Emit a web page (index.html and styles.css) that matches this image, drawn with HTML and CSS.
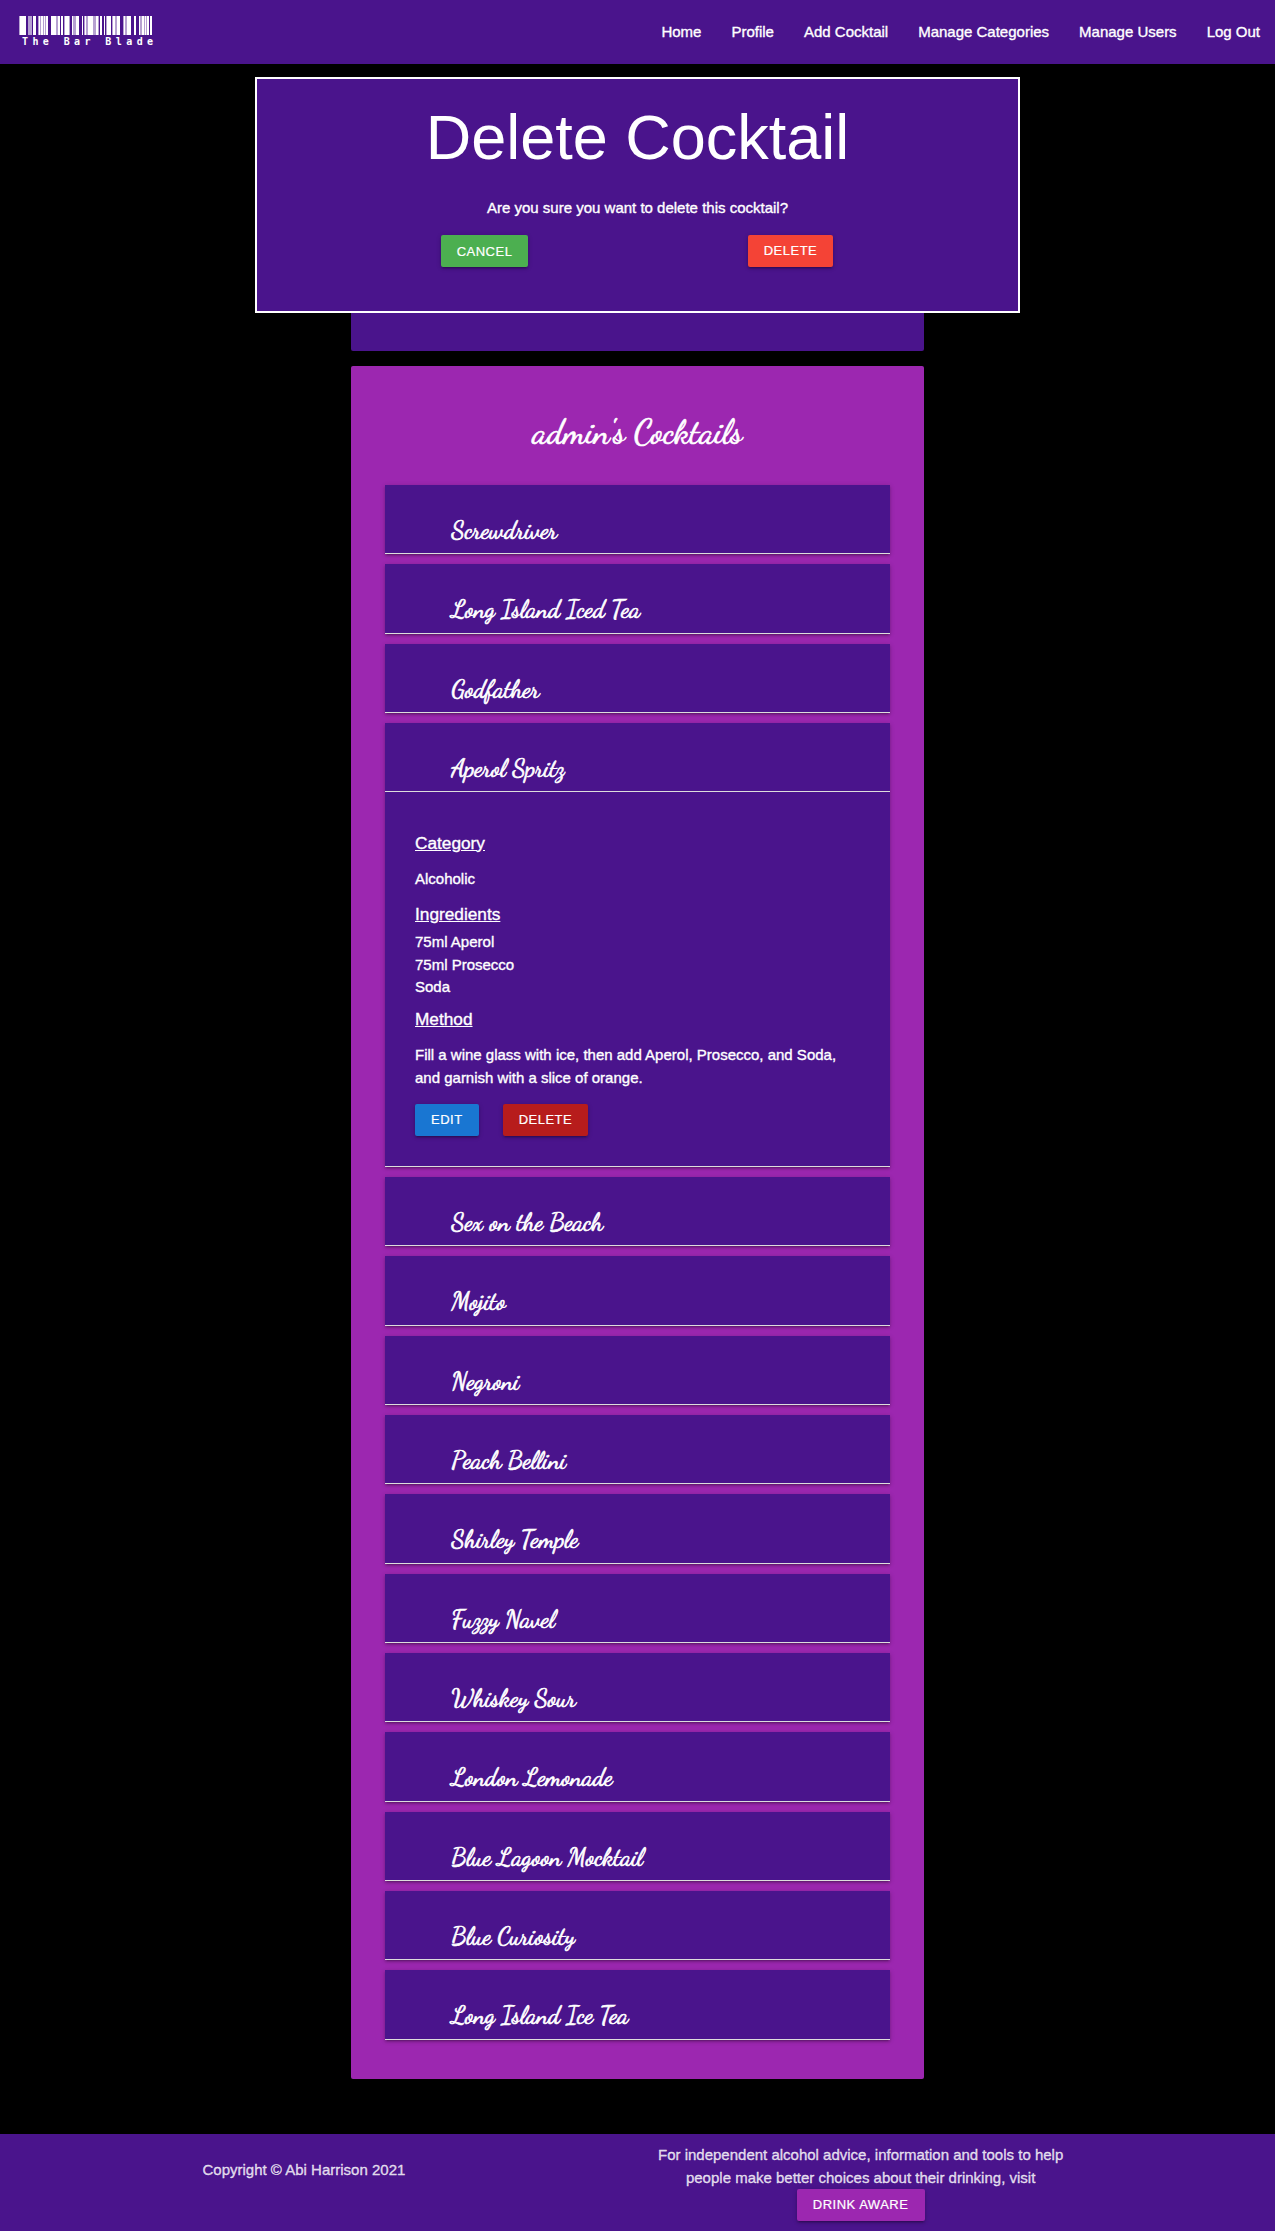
FILE: index.html
```html
<!DOCTYPE html>
<html lang="en">
<head>
<meta charset="utf-8">
<title>The Bar Blade</title>
<link rel="stylesheet" href="styles.css">
</head>
<body>
<nav class="navbar">
  <a class="logo">
    <svg class="barcode" width="134" height="20" viewBox="0 0 134 20" fill="#fff">
      <path opacity=".6" d="M0 1h7v19h-7zM9 1h4v19h-4zM19 1h10v19h-10zM36 1h5v19h-5zM45 1h6v19h-6zM53 1h7v19h-7zM65 1h15v19h-15zM87 1h5v19h-5zM93 1h8v19h-8zM104 1h8v19h-8zM120 1h10v19h-10z"/>
      <path d="M1 1h2v19h-2zM3 1h4v19h-4zM14 1h3v19h-3zM20 1h1v19h-1zM22 1h2v19h-2zM25 1h1v19h-1zM27 1h2v19h-2zM32 1h5v19h-5zM39 1h2v19h-2zM42 1h2v19h-2zM46 1h4v19h-4zM53 1h1v19h-1zM57 1h3v19h-3zM63 1h1v19h-1zM66 1h1v19h-1zM69 1h5v19h-5zM77 1h2v19h-2zM81 1h2v19h-2zM85 1h1v19h-1zM88 1h4v19h-4zM94 1h2v19h-2zM98 1h3v19h-3zM105 1h1v19h-1zM108 1h4v19h-4zM115 1h2v19h-2zM120 1h1v19h-1zM123 1h2v19h-2zM126 1h1v19h-1zM128 1h2v19h-2zM131 1h2v19h-2z"/>
    </svg>
    <span class="brand">The Bar Blade</span>
  </a>
  <ul class="menu">
    <li>Home</li><li>Profile</li><li>Add Cocktail</li><li>Manage Categories</li><li>Manage Users</li><li>Log Out</li>
  </ul>
</nav>
<main class="page">
  <section class="profile-card"></section>
  <section class="cocktails">
    <h4 class="title">admin's Cocktails</h4>
    <ul class="list">
      <li class="item"><div class="name">Screwdriver</div></li>
      <li class="item"><div class="name">Long Island Iced Tea</div></li>
      <li class="item"><div class="name">Godfather</div></li>
      <li class="item"><div class="name">Aperol Spritz</div>
        <div class="details">
          <h6>Category</h6>
          <p>Alcoholic</p>
          <h6>Ingredients</h6>
          <ul><li>75ml Aperol</li><li>75ml Prosecco</li><li>Soda</li></ul>
          <h6>Method</h6>
          <p>Fill a wine glass with ice, then add Aperol, Prosecco, and Soda, and garnish with a slice of orange.</p>
          <div class="actions"><a class="btn blue">Edit</a><a class="btn dark-red">Delete</a></div>
        </div>
      </li>
      <li class="item"><div class="name">Sex on the Beach</div></li>
      <li class="item"><div class="name">Mojito</div></li>
      <li class="item"><div class="name">Negroni</div></li>
      <li class="item"><div class="name">Peach Bellini</div></li>
      <li class="item"><div class="name">Shirley Temple</div></li>
      <li class="item"><div class="name">Fuzzy Navel</div></li>
      <li class="item"><div class="name">Whiskey Sour</div></li>
      <li class="item"><div class="name">London Lemonade</div></li>
      <li class="item"><div class="name">Blue Lagoon Mocktail</div></li>
      <li class="item"><div class="name">Blue Curiosity</div></li>
      <li class="item"><div class="name">Long Island Ice Tea</div></li>
    </ul>
  </section>
</main>
<footer class="footer">
  <div class="copyright">Copyright © Abi Harrison 2021</div>
  <div class="advice">For independent alcohol advice, information and tools to help people make better choices about their drinking, visit <a class="btn purple">Drink Aware</a></div>
</footer>
<div class="modal">
  <h1>Delete Cocktail</h1>
  <p>Are you sure you want to delete this cocktail?</p>
  <div class="choices">
    <div><a class="btn green">Cancel</a></div>
    <div><a class="btn red">Delete</a></div>
  </div>
</div>
</body>
</html>
```
FILE: styles.css
```css
* { box-sizing: border-box; }
html { font-size: 15px; }
body {
  margin: 0;
  background: #000;
  color: #fff;
  font: 15px/1.5 "Liberation Sans", Arial, sans-serif;
  -webkit-text-stroke: 0.35px currentColor;
}
ul { list-style: none; margin: 0; padding: 0; }
p { margin: 15px 0; }
.navbar {
  height: 64px;
  background: #4a148c;
  display: flex;
  justify-content: space-between;
}
.logo { display: flex; flex-direction: column; padding: 15px 0 0 19px; }
.barcode { display: block; }
.brand {
  font: bold 10px/13px "DejaVu Sans Mono", monospace;
  letter-spacing: 4.4px;
  padding: 0 0 0 3px;
  -webkit-text-stroke: 0;
}
.menu { display: flex; line-height: 64px; }
.menu li { padding: 0 15px; }
.page { width: 573px; margin: 0 auto; padding-top: 15px; }
.profile-card { height: 272px; background: #4a148c; border-radius: 2px; }
.cocktails {
  margin-top: 15px;
  height: 1713px;
  padding: 46px 34px 0;
  background: #9c27b0;
  border-radius: 2px;
}
.title, .name { font-family: "Dancing Script", cursive; font-weight: 400; -webkit-text-stroke: .65px currentColor; }
.title { margin: 0; height: 73px; font-size: 34.2px; line-height: 42px; text-align: center; }
.item {
  margin-bottom: 10px;
  background: #4a148c;
  box-shadow: 0 2px 2px 0 rgba(0,0,0,.14), 0 3px 1px -2px rgba(0,0,0,.12), 0 1px 5px 0 rgba(0,0,0,.2);
}
.name {
  height: 69.33px;
  padding: 31px 0 0 66.5px;
  border-bottom: 1px solid #ddd;
  font-size: 24.6px;
  line-height: 28px;
  white-space: nowrap;
}
.details { padding: 30px 30px 29.5px; border-bottom: 1px solid #ddd; display: flow-root; }
.details h6 {
  margin: 11.5px 0 6.9px;
  font-size: 17.25px;
  line-height: 110%;
  font-weight: 400;
  text-decoration: underline;
}
.actions { display: flex; gap: 24px; }
.btn {
  display: inline-block;
  height: 32px;
  padding: 0 16px;
  border-radius: 2px;
  font-size: 13px;
  line-height: 32.4px;
  letter-spacing: .5px;
  text-transform: uppercase;
  color: #fff;
  -webkit-text-stroke: .2px currentColor;
  box-shadow: 0 2px 2px 0 rgba(0,0,0,.14), 0 3px 1px -2px rgba(0,0,0,.12), 0 1px 5px 0 rgba(0,0,0,.2);
}
.actions .btn { margin-bottom: .4px; }
.blue { background: #1976d2; }
.dark-red { background: #b71c1c; }
.green { background: #4caf50; line-height: 34px; }
.red { background: #f44336; }
.purple { background: #9c27b0; }
.footer {
  margin-top: 55px;
  height: 97px;
  padding: 10px 191.25px 0;
  background: #4a148c;
  color: rgba(255,255,255,.8);
  display: flex;
}
.footer > div { width: 50%; padding: 0 11.25px; }
.footer > .copyright { padding-top: 15px; }
.advice { text-align: center; }
.advice .btn { display: block; width: 128px; margin: 0 auto; }
.modal {
  position: absolute;
  top: 77px;
  left: 255px;
  width: 765px;
  height: 236px;
  padding: 24px;
  border: 2px solid #fff;
  background: #4a148c;
  text-align: center;
}
.modal h1 { margin: 0 0 25.2px; font-size: 63px; line-height: 110%; font-weight: 400; -webkit-text-stroke: 0; }
.modal p { margin: 0 0 15px; }
.choices { display: flex; justify-content: center; }
.choices > div { width: 306px; }
```
